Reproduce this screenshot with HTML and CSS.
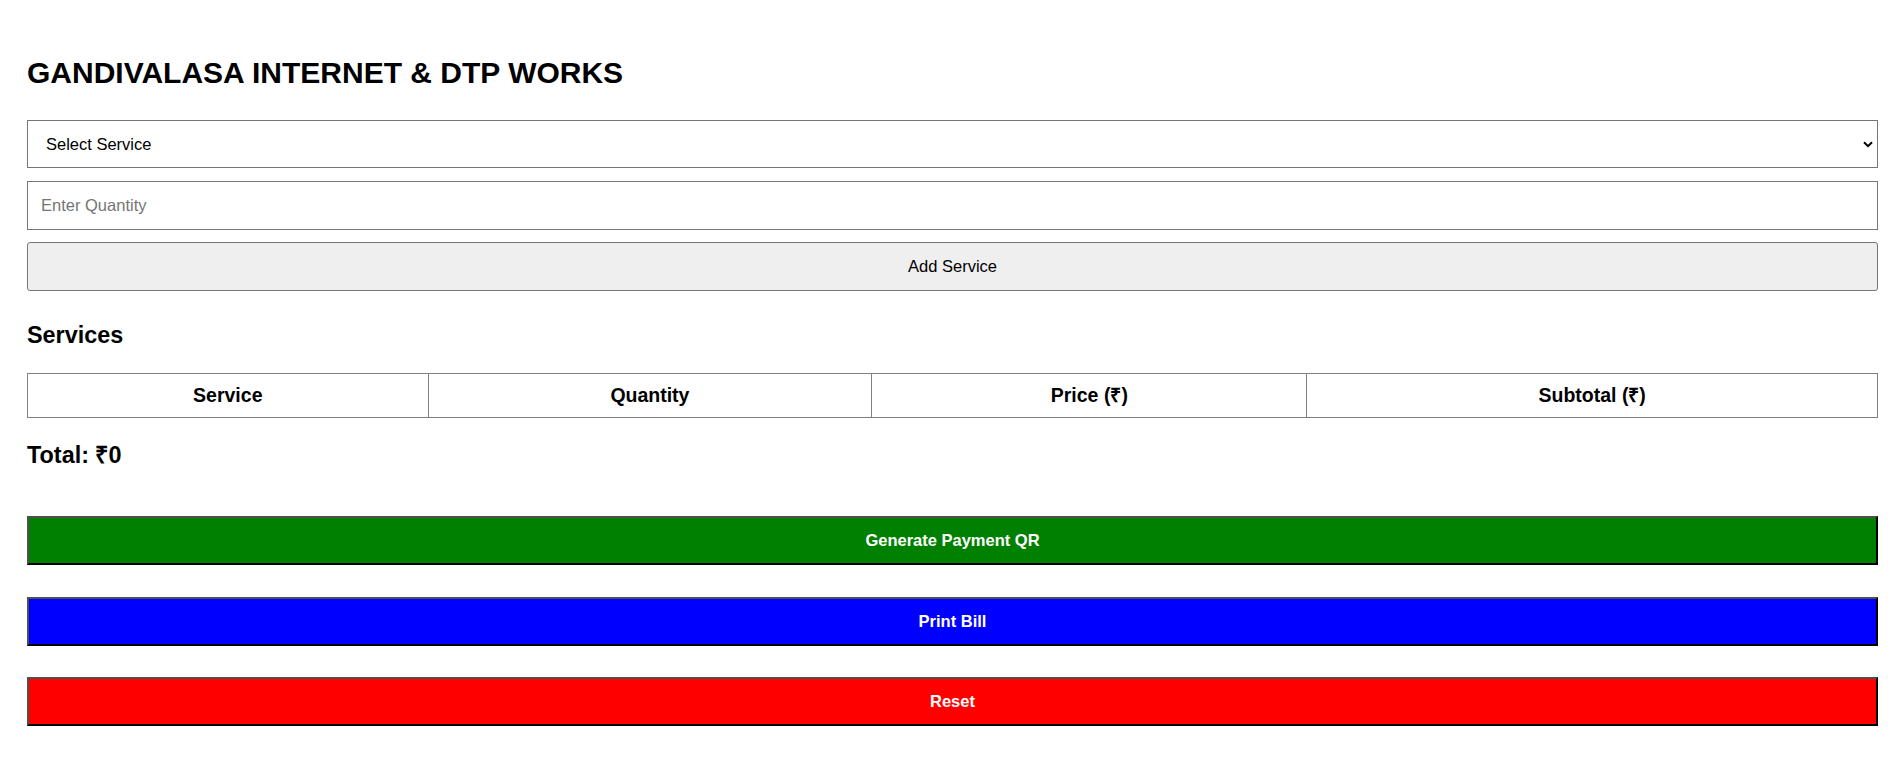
FILE: index.html
```html
<!DOCTYPE html>
<html lang="en">
<head>
<meta charset="utf-8">
<title>Gandivalasa Internet &amp; DTP Works</title>
<link rel="stylesheet" href="styles.css">
</head>
<body>
<main class="app">
  <h1 class="title">GANDIVALASA INTERNET &amp; DTP WORKS</h1>
  <div class="select-wrap">
    <select class="field field-select">
      <option>Select Service</option>
    </select>
    <svg class="chevron" width="10" height="7" viewBox="0 0 10 7" aria-hidden="true">
      <path d="M1 1.2 L5 5.2 L9 1.2" fill="none" stroke="#000" stroke-width="2"/>
    </svg>
  </div>
  <input class="field field-input" type="number" placeholder="Enter Quantity">
  <button class="add-btn" type="button">Add Service</button>

  <h2 class="section-title">Services</h2>
  <table class="services">
    <thead>
      <tr>
        <th class="col-service">Service</th>
        <th class="col-qty">Quantity</th>
        <th class="col-price">Price (₹)</th>
        <th class="col-sub">Subtotal (₹)</th>
      </tr>
    </thead>
    <tbody></tbody>
  </table>
  <h2 class="total">Total: ₹0</h2>

  <button class="action action-green" type="button">Generate Payment QR</button>
  <button class="action action-blue" type="button">Print Bill</button>
  <button class="action action-red" type="button">Reset</button>
</main>
</body>
</html>
```

FILE: styles.css
```css
html, body {
  margin: 0;
  padding: 0;
  background: #ffffff;
}

body {
  font-family: "Liberation Sans", Arial, sans-serif;
  color: #000;
  padding: 0 20px 0 27px;
}

.app {
  display: flex;
  flex-direction: column;
  padding-top: 55px;
}

.title {
  margin: 0 0 30px;
  font-size: 30px;
  line-height: 35px;
  font-weight: bold;
}

.field {
  box-sizing: border-box;
  width: 100%;
  margin: 0;
  border: 1px solid #767676;
  border-radius: 0;
  background: #fff;
  font-family: "Liberation Sans", Arial, sans-serif;
  font-size: 16.5px;
  color: #000;
  padding: 0 13px;
}

.select-wrap {
  position: relative;
  margin-bottom: 13px;
}

.field-select {
  display: block;
  height: 48px;
  appearance: none;
  -webkit-appearance: none;
  padding-left: 18px;
  padding-right: 30px;
  outline: none;
}

.chevron {
  position: absolute;
  right: 5px;
  top: 21px;
  pointer-events: none;
}

.field-input {
  height: 49px;
  margin-bottom: 12px;
  outline: none;
}

.field-input::placeholder {
  color: #757575;
}

.add-btn {
  box-sizing: border-box;
  width: 100%;
  height: 49px;
  margin: 0;
  border: 1px solid #767676;
  border-radius: 3px;
  background: #efefef;
  font-family: "Liberation Sans", Arial, sans-serif;
  font-size: 16.5px;
  color: #000;
}

.section-title {
  margin: 31px 0 25px;
  font-size: 23.4px;
  line-height: 26px;
  font-weight: bold;
}

.services {
  width: 100%;
  border-collapse: collapse;
  table-layout: fixed;
  border: 1px solid #808080;
}

.services th {
  border: 1px solid #808080;
  padding: 10px;
  font-size: 19.5px;
  line-height: 23px;
  font-weight: bold;
  text-align: center;
}

.col-service { width: 21.5%; }
.col-qty { width: 23.94%; }
.col-price { width: 23.45%; }
.col-sub { width: 31.11%; }

.total {
  margin: 24px 0 48px;
  font-size: 23.4px;
  line-height: 26px;
  font-weight: bold;
}

.action {
  box-sizing: border-box;
  width: 100%;
  height: 49px;
  margin: 0;
  border-style: solid;
  border-width: 2px;
  border-color: #4f4f4f #000 #000 #4f4f4f;
  font-family: "Liberation Sans", Arial, sans-serif;
  font-size: 16.5px;
  font-weight: bold;
  color: #fff;
}

.action-green {
  background: #008000;
  margin-bottom: 32px;
}

.action-blue {
  background: #0000ff;
  margin-bottom: 31px;
}

.action-red {
  background: #ff0000;
}
```
